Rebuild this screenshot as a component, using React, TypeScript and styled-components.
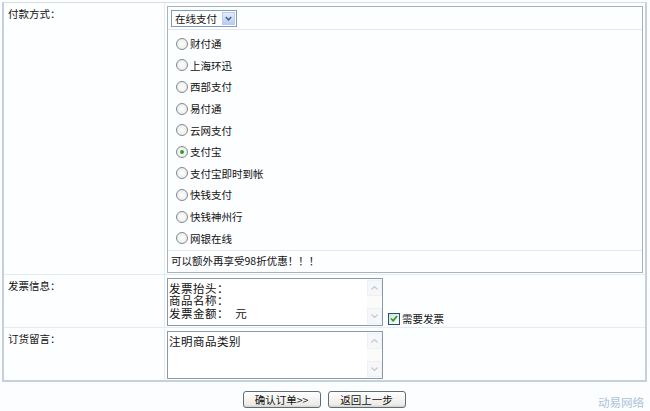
import React, { useState } from "react";
import styled, { createGlobalStyle } from "styled-components";

const GlobalStyle = createGlobalStyle`
  html, body {
    margin: 0;
    padding: 0;
    background: #fcfdfe;
    font-family: "Noto Sans CJK SC", "Liberation Sans", sans-serif;
    font-size: 10.5px;
    color: #111;
  }
`;

const Page = styled.div`
  width: 650px;
  height: 411px;
  position: relative;
  overflow: hidden;
  padding-top: 2px;
  box-sizing: border-box;
`;

const FormTable = styled.div`
  margin: 0 3px 0 2px;
  border: 2px solid #c6d0dc;
  border-top: 1px solid #d6dde6;
  display: grid;
  grid-template-columns: 161px 1fr;
  background: #fdfeff;
`;

const Label = styled.div<{ last?: boolean }>`
  padding: 4px 0 0 4px;
  border-right: 1px solid #e6ebf0;
  border-bottom: ${({ last }) => (last ? "none" : "1px solid #e6ebf0")};
  line-height: 14px;
`;

const Field = styled.div<{ last?: boolean }>`
  padding: 3px 2px 1px 2px;
  border-bottom: ${({ last }) => (last ? "none" : "1px solid #e6ebf0")};
  display: flex;
  align-items: flex-end;
  gap: 5px;
`;

const PayBox = styled.div`
  flex: 1;
  border: 1px solid #a9b3bd;
  background: #fdfeff;
`;

const PayHead = styled.div`
  padding: 3px 3px 2px;
  border-bottom: 1px solid #e4e8ec;
  height: 17px;
`;

const Select = styled.div`
  display: inline-flex;
  align-items: center;
  height: 15px;
  border: 1px solid #7f9db9;
  background: #fff;
  padding-left: 3px;
  gap: 5px;
`;

const SelectArrow = styled.span`
  width: 13px;
  height: 13px;
  margin-right: 1px;
  background: linear-gradient(#e2ebfd, #b8cdf5);
  border: 1px solid #b9cbf0;
  box-sizing: border-box;
  display: flex;
  align-items: center;
  justify-content: center;
`;

const Options = styled.div`
  padding: 3px 0 1px 8px;
  border-bottom: 1px solid #e4e8ec;
`;

const OptionRow = styled.label`
  display: flex;
  align-items: center;
  height: 21.6px;
  gap: 2px;
  cursor: pointer;
`;

const RadioMark = styled.span<{ checked: boolean }>`
  width: 10px;
  height: 10px;
  border-radius: 50%;
  border: 1px solid #7c8a96;
  background: radial-gradient(circle, #ffffff 0%, #e6e6e0 100%);
  display: flex;
  align-items: center;
  justify-content: center;
  &::after {
    content: "";
    width: 4px;
    height: 4px;
    border-radius: 50%;
    background: ${({ checked }) => (checked ? "#3a9a2e" : "transparent")};
  }
`;

const Notice = styled.div`
  padding: 3px 3px 4px;
  height: 14px;
  line-height: 14px;
`;

const TextBox = styled.div`
  width: 214px;
  height: 46px;
  border: 1px solid #8a9aa8;
  background: #fff;
  display: flex;
  font-size: 11.5px;
  letter-spacing: 0.5px;
  line-height: 12.5px;
  white-space: pre;
`;

const TextBody = styled.div`
  flex: 1;
  padding: 3px 1px;
`;

const ScrollBar = styled.div`
  width: 15px;
  display: flex;
  flex-direction: column;
  justify-content: space-between;
  background: #fbfbf9;
  padding: 1px 0;
`;

const ScrollBtn = styled.span`
  height: 14px;
  display: flex;
  align-items: center;
  justify-content: center;
  border: 1px solid #eef0f4;
  background: #f6f7f9;
`;

const CheckWrap = styled.label`
  display: flex;
  align-items: center;
  gap: 2px;
  line-height: 14px;
`;

const CheckMark = styled.span`
  width: 10px;
  height: 10px;
  border: 1px solid #1c5180;
  background: linear-gradient(135deg, #dcdcd6, #fff);
  display: flex;
  align-items: center;
  justify-content: center;
`;

const Actions = styled.div`
  display: flex;
  justify-content: center;
  gap: 7px;
  padding: 9px 0 0 0;
  margin-left: -2px;
`;

const Button = styled.button`
  width: 78px;
  height: 17px;
  padding: 0;
  border: 1px solid #5e6d7a;
  border-radius: 3px;
  background: linear-gradient(#ffffff, #ecebe6 85%, #d6d0c5);
  font-family: inherit;
  font-size: 10.5px;
  line-height: 13px;
  color: #111;
`;

const Watermark = styled.div`
  position: absolute;
  right: 6px;
  bottom: 1px;
  color: #a9c2d9;
  font-size: 11.5px;
`;

const payments = [
  "财付通",
  "上海环迅",
  "西部支付",
  "易付通",
  "云网支付",
  "支付宝",
  "支付宝即时到帐",
  "快钱支付",
  "快钱神州行",
  "网银在线",
];

const Arrow = ({ up }: { up?: boolean }) => (
  <svg width="7" height="4" viewBox="0 0 7 4">
    <path
      d={up ? "M0.5 3.5 L3.5 0.5 L6.5 3.5" : "M0.5 0.5 L3.5 3.5 L6.5 0.5"}
      fill="none"
      stroke="#c4cad2"
      strokeWidth="1.2"
    />
  </svg>
);

function TextArea({ text }: { text: string }) {
  return (
    <TextBox>
      <TextBody>{text}</TextBody>
      <ScrollBar>
        <ScrollBtn>
          <Arrow up />
        </ScrollBtn>
        <ScrollBtn>
          <Arrow />
        </ScrollBtn>
      </ScrollBar>
    </TextBox>
  );
}

export default function App() {
  const [method, setMethod] = useState("支付宝");

  return (
    <Page>
      <GlobalStyle />
      <FormTable>
        <Label>付款方式：</Label>
        <Field>
          <PayBox>
            <PayHead>
              <Select>
                在线支付
                <SelectArrow>
                  <svg width="7" height="5" viewBox="0 0 7 5">
                    <path d="M0.8 1 L3.5 3.8 L6.2 1" fill="none" stroke="#4d6185" strokeWidth="1.5" />
                  </svg>
                </SelectArrow>
              </Select>
            </PayHead>
            <Options>
              {payments.map((p) => (
                <OptionRow key={p} onClick={() => setMethod(p)}>
                  <RadioMark checked={method === p} />
                  {p}
                </OptionRow>
              ))}
            </Options>
            <Notice>可以额外再享受98折优惠！！！</Notice>
          </PayBox>
        </Field>

        <Label>发票信息：</Label>
        <Field>
          <TextArea text={"发票抬头：\n商品名称：\n发票金额：  元"} />
          <CheckWrap>
            <CheckMark>
              <svg width="8" height="7" viewBox="0 0 8 7">
                <path d="M1 3.5 L3.2 5.8 L7 1" fill="none" stroke="#21a121" strokeWidth="1.7" />
              </svg>
            </CheckMark>
            需要发票
          </CheckWrap>
        </Field>

        <Label last>订货留言：</Label>
        <Field last>
          <TextArea text="注明商品类别" />
        </Field>
      </FormTable>
      <Actions>
        <Button>确认订单&gt;&gt;</Button>
        <Button>返回上一步</Button>
      </Actions>
      <Watermark>动易网络</Watermark>
    </Page>
  );
}
